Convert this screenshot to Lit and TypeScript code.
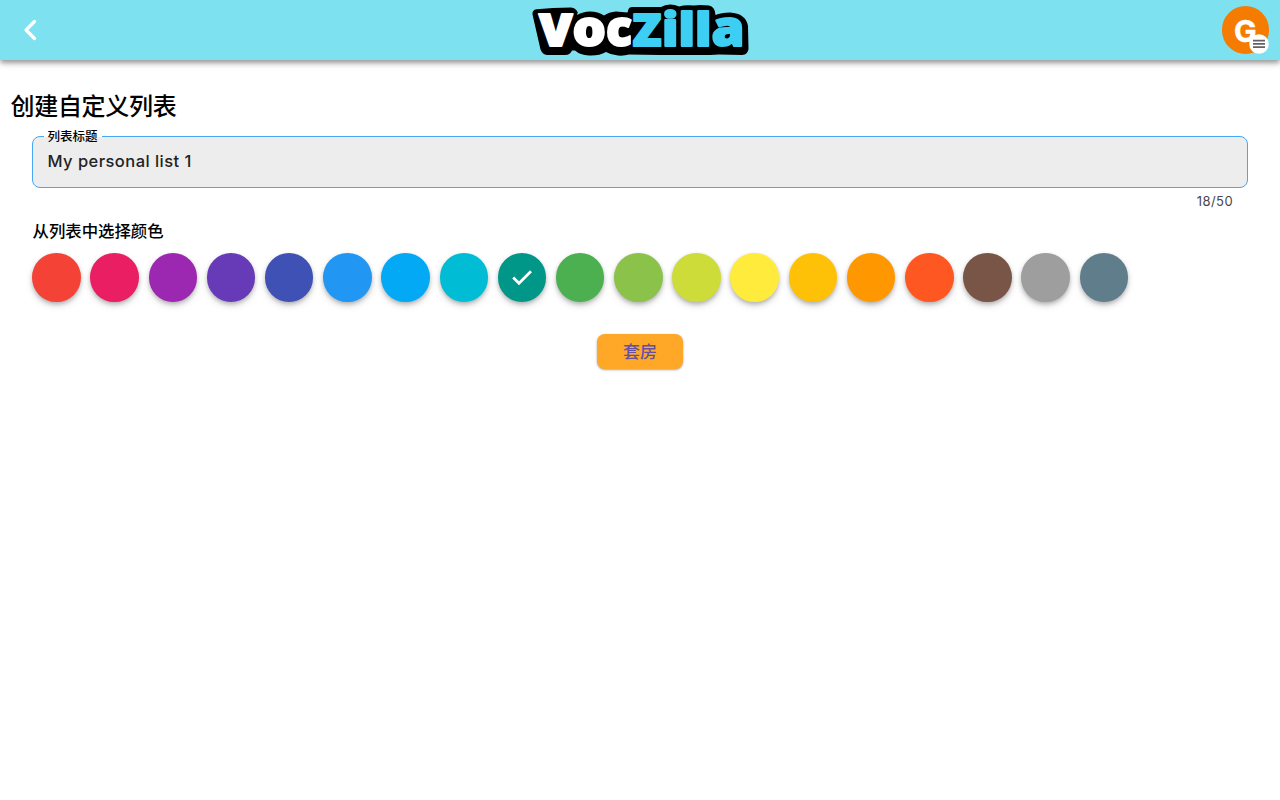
import { LitElement, html, css, svg } from "lit";
import { customElement, property, state } from "lit/decorators.js";
import { styleMap } from "lit/directives/style-map.js";

const COLORS = [
  "#f44336", "#e91e63", "#9c27b0", "#673ab7", "#3f51b5", "#2196f3", "#03a9f4",
  "#00bcd4", "#009688", "#4caf50", "#8bc34a", "#cddc39", "#ffeb3b", "#ffc107",
  "#ff9800", "#ff5722", "#795548", "#9e9e9e", "#607d8b",
];

// character, left edge, drawn width, fill, font size
const LETTERS: [string, number, number, string, number][] = [
  ["V", 19, 33.5, "#fff", 44],
  ["o", 52.5, 33.5, "#fff", 50],
  ["c", 86, 26, "#fff", 50],
  ["Z", 112.5, 29, "#3dcef3", 44],
  ["i", 142, 16.5, "#3dcef3", 46.5],
  ["l", 158.5, 16.5, "#3dcef3", 46.5],
  ["l", 175, 16.5, "#3dcef3", 46.5],
  ["a", 191.5, 33, "#3dcef3", 50],
];

@customElement("voc-logo")
class VocLogo extends LitElement {
  static styles = css`
    :host { display: block; height: 60px; }
    svg { display: block; overflow: visible; }
    text { font-family: "Open Sans", sans-serif; font-weight: 800; }
    .face { stroke-width: 2px; stroke-linejoin: round; }
  `;
  render() {
    return html`<svg width="240" height="60" viewBox="0 0 240 60">
      <path d="M12.500 14.500Q12 10 16.500 9.300L33 8L51 7.500Q56 8 57.800 12.500L57 15Q63 11.500 70 11.500Q78 11.500 84 15.500Q89 12 96 11.500L107.500 12.500L108.500 9Q109.500 7 112 7L141 7Q145 4.500 150 4.500Q155 4.500 159 6.500Q165 4.500 174 5.500Q180 4.500 189 5.500Q195 6.500 195.500 15Q201 12.500 210 12.500Q226 13.500 228 26L228.500 49Q228 54.500 222 55L199 54.500L190 55L140 55L109 54.500Q104 56 98 55.500Q91 55 86 52Q79 56 69 55.500Q60 55 55 50.500L52 50.500Q50 55 45 55L27 55Q22.500 54.500 20.500 49.500Z" fill="#000"/>
      ${LETTERS.map(([c, x, w, f, s]) => svg`<text class="face" x=${x} y="46.3" font-size=${s} fill=${f} stroke=${f} textLength=${w} lengthAdjust="spacingAndGlyphs">${c}</text>`)}
    </svg>`;
  }
}

@customElement("color-dot")
class ColorDot extends LitElement {
  @property() color = "#000";
  @property({ type: Boolean }) checked = false;
  static styles = css`
    :host { display: block; width: 48.5px; height: 48.5px; flex: none; }
    .dot {
      width: 100%; height: 100%; border: 0; padding: 0; border-radius: 50%;
      display: flex; align-items: center; justify-content: center;
      box-shadow: 0 3px 5px -1px rgba(0,0,0,.2), 0 4px 8px -1px rgba(0,0,0,.14), 0 1px 4px rgba(0,0,0,.08);
    }
  `;
  render() {
    return html`<button class="dot" style=${styleMap({ background: this.color })}>
      ${this.checked ? html`<svg width="24" height="24" viewBox="0 0 24 24"><path d="M3.200 12.500 9 18.300 21 6.300" fill="none" stroke="#fff" stroke-width="2.700"/></svg>` : ""}
    </button>`;
  }
}

@customElement("app-root")
class AppRoot extends LitElement {
  @state() selected = 8;
  @state() name = "My personal list 1";
  static styles = css`
    :host {
      display: block; height: 800px; background: #fff; color: #000;
      font-family: Inter, "Noto Sans CJK SC", sans-serif;
    }
    .bar {
      height: 60px; background: #7ee1f0; display: grid;
      grid-template-columns: 1fr 240px 1fr; align-items: center;
      box-shadow: 0 3px 4px -1px rgba(0,0,0,.2), 0 4px 5px rgba(0,0,0,.18), 0 1px 10px rgba(0,0,0,.12);
    }
    .back { margin-left: 18px; width: 24px; height: 24px; }
    .back svg { display: block; }
    .avatar {
      justify-self: end; margin-right: 11px; width: 47.5px; height: 47.5px; border-radius: 50%;
      background: #f57c00; color: #fff; position: relative;
      display: flex; align-items: center; justify-content: center;
      font: 700 30px/48px Inter, sans-serif;
    }
    .letter { padding-top: 2px; -webkit-text-stroke: .5px #fff; }
    .menu { position: absolute; right: 0; bottom: -.5px; width: 20px; height: 20px; }
    .main { padding: 27px 32px 0; }
    h1 { margin: 0 0 0 -21.5px; font: 500 24px/36px "Noto Sans CJK SC", sans-serif; letter-spacing: -.3px; }
    .field {
      box-sizing: border-box; height: 52px; margin: 12.500px 0 0; padding: 0 14px 2px 11px; border: 1px solid #47a6f5;
      border-radius: 8px; background: #ededed; position: relative;
      display: flex; align-items: center;
    }
    .label {
      position: absolute; left: 10.5px; top: -9px; padding: 0 4px; height: 16px;
      background: linear-gradient(#fff 9px, #ededed 9px);
      font: 500 12.5px/16px "Noto Sans CJK SC", sans-serif;
    }
    .value { padding-left: 3.5px; font: 450 16.5px/24px Inter, sans-serif; letter-spacing: .45px; color: #222; }
    .count { text-align: right; padding-right: 15px; font: 400 13px/18px Inter, sans-serif; letter-spacing: .4px; color: #49454f; margin-top: 4.5px; }
    h2 { margin: 7px 0 0 .5px; font: 500 16.4px/26px "Noto Sans CJK SC", sans-serif; }
    .dots { display: flex; gap: 9.7px; margin: 10px 0 0 .2px; }
    .actions { display: flex; justify-content: center; margin-top: 32.500px; }
    .ok {
      width: 86px; height: 34.500px; border: 0; padding: 0; border-radius: 8px; background: #ffa726; color: #6750a4;
      font: 500 17px/34px "Noto Sans CJK SC", sans-serif;
      box-shadow: 0 1px 2px rgba(0,0,0,.25), 0 1px 3px rgba(0,0,0,.12);
    }
  `;
  render() {
    return html`
      <header class="bar">
        <div class="back"><svg width="24" height="24" viewBox="0 0 24 24"><path d="M16.500 3.500 8 12l8.500 8.500" fill="none" stroke="#fff" stroke-width="3.200" stroke-linecap="round" stroke-linejoin="round"/></svg></div>
        <voc-logo></voc-logo>
        <div class="avatar"><span class="letter">G</span>
          <svg class="menu" viewBox="0 0 20 20"><circle cx="10" cy="10" r="9.800" fill="#fff"/><path d="M4 6.600h12M4 9.900h12M4 13.200h12" stroke="#626262" stroke-width="1.800"/></svg>
        </div>
      </header>
      <main class="main">
        <h1>创建自定义列表</h1>
        <div class="field"><span class="label">列表标题</span><span class="value">${this.name}</span></div>
        <div class="count">${this.name.length}/50</div>
        <h2>从列表中选择颜色</h2>
        <div class="dots">
          ${COLORS.map((c, i) => html`<color-dot .color=${c} .checked=${i === this.selected} @click=${() => (this.selected = i)}></color-dot>`)}
        </div>
        <div class="actions"><button class="ok">套房</button></div>
      </main>`;
  }
}
